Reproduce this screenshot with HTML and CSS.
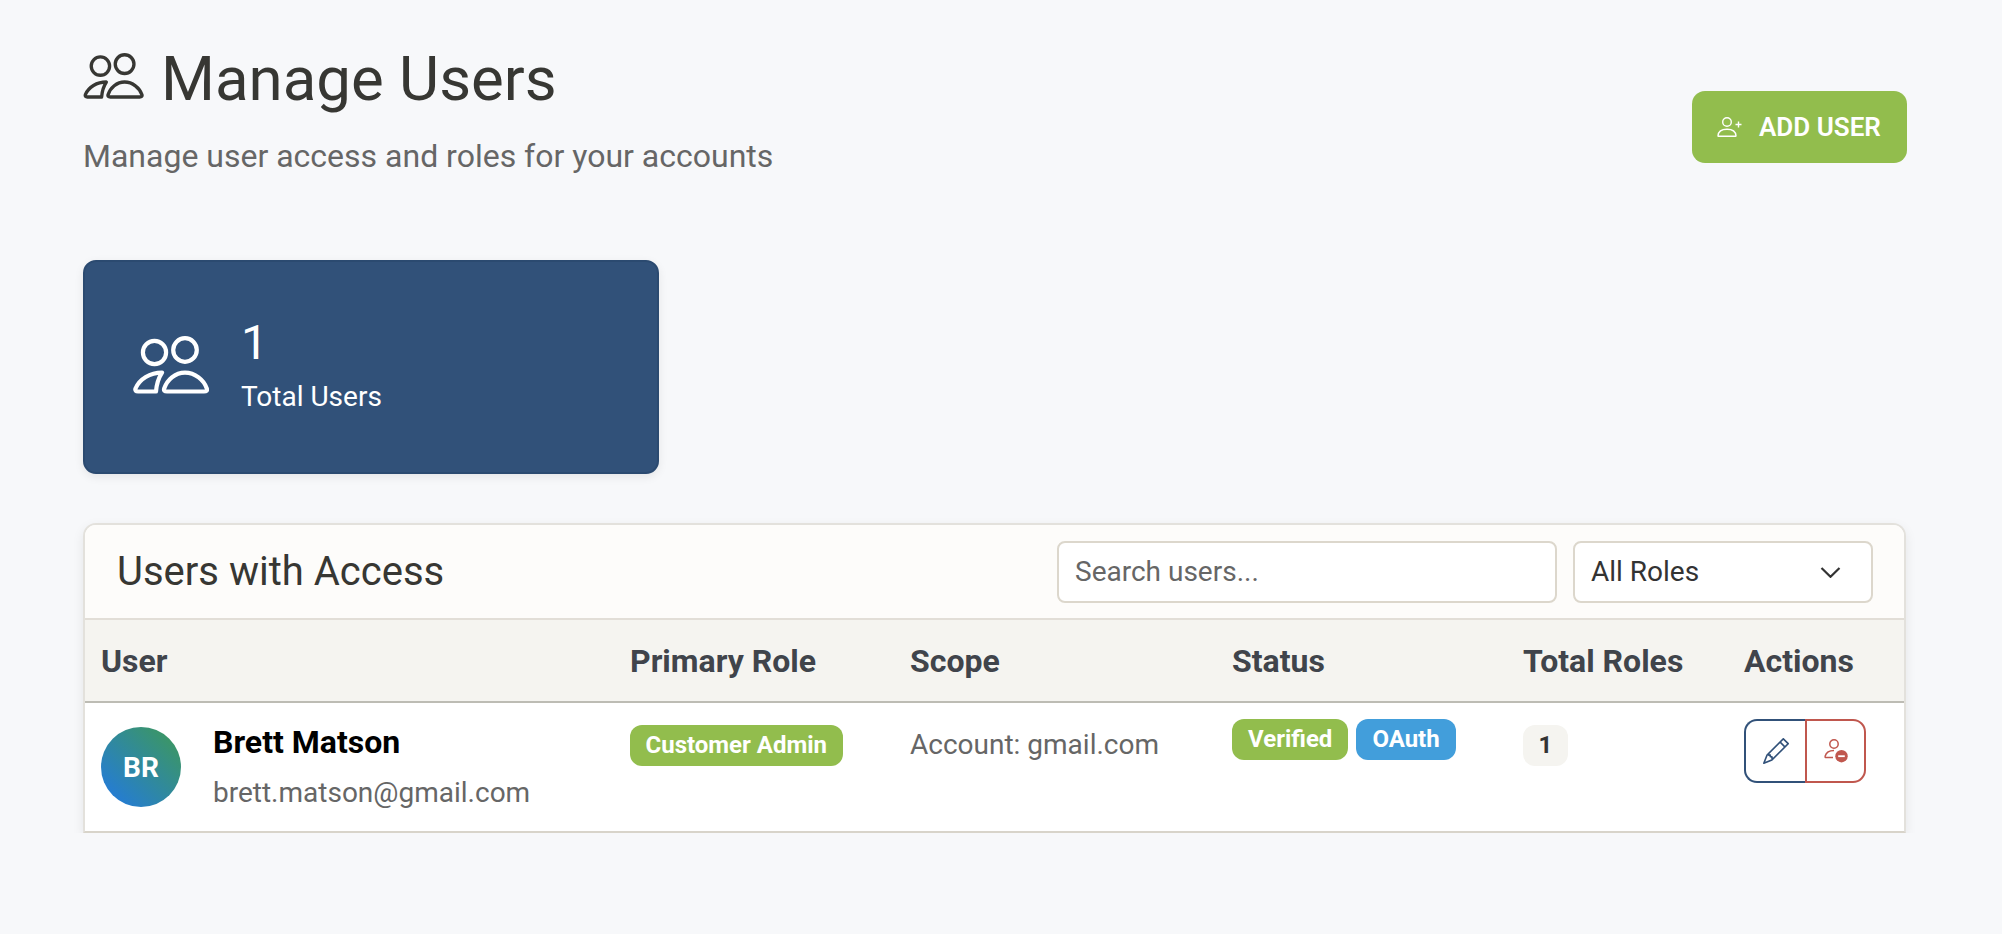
FILE: index.html
```html
<!DOCTYPE html>
<html lang="en">
<head>
  <meta charset="UTF-8" />
  <meta name="viewport" content="width=device-width, initial-scale=1.0"/>
  <title>Manage Users</title>
  <link rel="stylesheet" href="styles.css">
</head>
<body>

<svg class="icon-defs" width="0" height="0" aria-hidden="true">
  <symbol id="people" viewBox="0 0 76 58">
    <g fill="none" stroke="currentColor" stroke-width="4.200" stroke-linejoin="round">
      <circle cx="21.500" cy="16.500" r="11.600"/>
      <circle cx="52" cy="14" r="11.800"/>
      <path d="M5 55.500H23C23.500 49 25.500 42 29 36.600 17 36.600 6.500 43 2.500 52.500 1.800 54.500 3 55.500 5 55.500Z"/>
      <path d="M34 55.500H71C73.500 55.500 74.500 54.500 73.800 52.500 71 44 62 36.600 52 36.600 42 36.600 34 44 31.200 52.500 30.500 54.500 31.500 55.500 34 55.500Z"/>
    </g>
  </symbol>
</svg>

<main class="page">

  <!-- Page title -->
  <header class="page-header">
    <div>
      <h1 class="page-title">
        <svg class="title-icon"><use href="#people"/></svg>
        Manage Users
      </h1>
      <p class="page-sub">Manage user access and roles for your accounts</p>
    </div>
    <button class="add-btn">
      <svg class="add-icon" viewBox="0 0 26 20" fill="none" stroke="currentColor" stroke-width="1.400">
        <circle cx="10" cy="5" r="4.300"/>
        <path d="M1 18.800c.3-4.200 4-6.600 9-6.600s8.700 2.400 9 6.600c0 .3-.2.5-.5.5H1.500c-.3 0-.5-.2-.5-.5Z"/>
        <path d="M21.500 4.500v6M18.500 7.500h6"/>
      </svg>
      ADD USER
    </button>
  </header>

  <!-- Stats -->
  <div class="stats">
    <div class="stat-card">
      <svg class="stat-icon"><use href="#people"/></svg>
      <div>
        <div class="stat-num">1</div>
        <div class="stat-label">Total Users</div>
      </div>
    </div>
  </div>

  <!-- Users table -->
  <section class="panel">
    <div class="panel-head">
      <h2 class="panel-title">Users with Access</h2>
      <div class="filters">
        <input class="search" type="text" placeholder="Search users..." />
        <div class="role-select">
          <select>
            <option>All Roles</option>
          </select>
          <svg class="chevron" viewBox="0 0 21 11" fill="none" stroke="currentColor" stroke-width="2.200">
            <path d="M1.500 1 10.500 9.800 19.500 1"/>
          </svg>
        </div>
      </div>
    </div>

    <table class="users">
      <colgroup>
        <col class="c-user"><col class="c-role"><col class="c-scope"><col class="c-status"><col class="c-total"><col class="c-actions">
      </colgroup>
      <thead>
        <tr>
          <th>User</th>
          <th>Primary Role</th>
          <th>Scope</th>
          <th>Status</th>
          <th>Total Roles</th>
          <th>Actions</th>
        </tr>
      </thead>
      <tbody>
        <tr>
          <td>
            <div class="user-cell">
              <div class="avatar">BR</div>
              <div>
                <div class="user-name">Brett Matson</div>
                <div class="user-mail">brett.matson@gmail.com</div>
              </div>
            </div>
          </td>
          <td><span class="badge badge-green badge-low">Customer Admin</span></td>
          <td><div class="scope">Account: gmail.com</div></td>
          <td>
            <div class="status-row">
              <span class="badge badge-green">Verified</span>
              <span class="badge badge-blue">OAuth</span>
            </div>
          </td>
          <td><span class="badge badge-count badge-low">1</span></td>
          <td>
            <div class="actions">
              <button class="act act-edit">
                <svg viewBox="0 0 16 16" fill="currentColor">
                  <path d="M12.146.146a.5.5 0 0 1 .708 0l3 3a.5.5 0 0 1 0 .708l-10 10a.5.5 0 0 1-.168.11l-5 2a.5.5 0 0 1-.65-.65l2-5a.5.5 0 0 1 .11-.168l10-10zM11.207 2.500 13.500 4.793 14.793 3.500 12.500 1.207 11.207 2.500zm1.586 3L10.500 3.207 4 9.707V10h.5a.5.5 0 0 1 .5.5v.5h.5a.5.5 0 0 1 .5.5v.5h.293l6.500-6.500zm-9.761 5.175-.106.106-1.528 3.821 3.821-1.528.106-.106A.5.5 0 0 1 5 12.500V12h-.5a.5.5 0 0 1-.5-.5V11h-.5a.5.5 0 0 1-.468-.325z"/>
                </svg>
              </button>
              <button class="act act-remove">
                <svg viewBox="0 0 24 24">
                  <circle cx="10" cy="5" r="4.200" fill="none" stroke="currentColor" stroke-width="1.500"/>
                  <path d="M9 18.500H2.200c-.9 0-1.400-.5-1.100-1.300C2.100 13.600 5.500 11.500 10 11.500" fill="none" stroke="currentColor" stroke-width="1.500"/>
                  <circle cx="17.500" cy="17.200" r="6.200" fill="currentColor"/>
                  <path d="M14.200 17.200h6.600" stroke="#fff" stroke-width="1.800"/>
                </svg>
              </button>
            </div>
          </td>
        </tr>
      </tbody>
    </table>
  </section>

</main>

</body>
</html>
```

FILE: styles.css
```css
* { box-sizing: border-box; }

body {
  margin: 0;
  font-family: Roboto, "Liberation Sans", sans-serif;
  background: #f7f8fa;
  color: #333;
  overflow: hidden;
}
.icon-defs { display: block; }

.page {
  padding: 43px 96px 0 83px;
}

/* Header */
.page-header {
  display: flex;
  justify-content: space-between;
  align-items: flex-start;
  height: 167px;
  margin-bottom: 50px;
}
.page-title {
  display: flex;
  align-items: center;
  gap: 17px;
  margin: 0;
  font-size: 61.8px;
  font-weight: 400;
  line-height: 72px;
  color: #373733;
}
.title-icon {
  width: 61px;
  height: 46px;
  margin-top: -6px;
}
.page-sub {
  margin: 18px 0 0;
  font-size: 32px;
  line-height: 46px;
  color: #666;
}
.add-btn {
  align-self: center;
  display: flex;
  align-items: center;
  gap: 16px;
  height: 72px;
  width: 215px;
  margin-right: -1px;
  padding: 0 0 0 25px;
  border: none;
  border-radius: 13px;
  background: #92bd4d;
  color: #fff;
  font-family: inherit;
  font-size: 26px;
  font-weight: 600;
}
.add-icon {
  width: 26px;
  height: 20px;
}

/* Stats */
.stats {
  margin-bottom: 49px;
}
.stat-card {
  display: flex;
  align-items: center;
  gap: 32px;
  width: 576px;
  height: 214px;
  padding: 0 0 0 48px;
  background: #315179;
  border: 2px solid #2b4a70;
  border-radius: 13px;
  box-shadow: 0 3px 10px rgba(0,0,0,0.08);
  color: #fff;
}
.stat-icon {
  width: 76px;
  height: 58px;
  margin-top: -5px;
}
.stat-num {
  margin-top: -2px;
  font-size: 48px;
  font-weight: 400;
  line-height: 56px;
}
.stat-label {
  margin-top: 6px;
  font-size: 28px;
  line-height: 40px;
}

/* Panel */
.panel {
  background: #fff;
  border: 2px solid #e3e1dc;
  border-bottom-color: #d8d4ca;
  border-radius: 13px 13px 0 0;
  box-shadow: 0 4px 12px rgba(0,0,0,0.08);
}
.panel-head {
  display: flex;
  justify-content: space-between;
  align-items: center;
  height: 95px;
  padding: 0 31px 0 32px;
  background: #fdfcfa;
  border-bottom: 2px solid #e2ded7;
  border-radius: 11px 11px 0 0;
}
.panel-title {
  margin: 0;
  font-size: 40px;
  font-weight: 400;
  color: #373733;
}
.filters {
  display: flex;
  gap: 16px;
}
.search,
.role-select select {
  height: 62px;
  border: 2px solid #dcd7cc;
  border-radius: 8px;
  background: #fff;
  font-family: inherit;
  font-size: 28px;
  color: #333;
}
.search {
  width: 500px;
  padding: 0 16px;
}
.search::placeholder {
  color: #666;
  opacity: 1;
}
.role-select {
  position: relative;
}
.role-select select {
  display: block;
  width: 300px;
  padding: 0 16px;
  appearance: none;
}
.chevron {
  position: absolute;
  top: 26px;
  right: 32px;
  width: 21px;
  height: 11px;
  color: #333;
}

/* Table */
.users {
  width: 100%;
  border-collapse: collapse;
  table-layout: fixed;
}
.c-user { width: 529px; }
.c-role { width: 280px; }
.c-scope { width: 322px; }
.c-status { width: 291px; }
.c-total { width: 221px; }
.c-actions { width: auto; }
.users th {
  height: 82px;
  padding: 0 16px;
  background: #f5f4f0;
  border-bottom: 2px solid #bdbcb4;
  text-align: left;
  font-size: 32px;
  font-weight: 700;
  color: #40444b;
}
.users td {
  padding: 16px;
  vertical-align: top;
}

.user-cell {
  display: flex;
  align-items: center;
  gap: 32px;
}
.avatar {
  flex: none;
  display: flex;
  align-items: center;
  justify-content: center;
  width: 80px;
  height: 80px;
  border-radius: 50%;
  background: linear-gradient(45deg, #2178e6, #3f9a54);
  color: #fff;
  font-size: 28px;
  font-weight: 700;
}
.user-name {
  font-size: 32px;
  font-weight: 700;
  line-height: 47px;
  color: #000;
}
.user-mail {
  margin: 4px 0 -1px;
  font-size: 28px;
  line-height: 46px;
  color: #666;
}
.scope {
  font-size: 28px;
  line-height: 40px;
  margin-top: 6px;
  color: #666;
}

.badge {
  display: inline-block;
  height: 41px;
  padding: 0 15.5px;
  border-radius: 12px;
  color: #fff;
  font-size: 24px;
  font-weight: 700;
  line-height: 41px;
}
.badge-low { margin-top: 6px; }
.badge-green { background: #92bd4d; }
.badge-blue { background: #429edb; }
.badge-count {
  background: #f5f4f0;
  color: #333;
}
.status-row {
  display: flex;
  gap: 8px;
}
.status-row .badge { padding: 0 16px; }

.actions {
  display: flex;
  width: 122px;
  height: 64px;
}
.act {
  display: flex;
  align-items: center;
  justify-content: center;
  width: 61px;
  padding: 0;
  background: #fff;
  border: 2px solid;
}
.act-edit {
  color: #315179;
  border-radius: 13px 0 0 13px;
  border-right: none;
}
.act-edit svg {
  width: 26px;
  height: 26px;
}
.act-remove {
  color: #c0574e;
  border-radius: 0 13px 13px 0;
}
.act-remove svg {
  width: 24px;
  height: 24px;
}
```
